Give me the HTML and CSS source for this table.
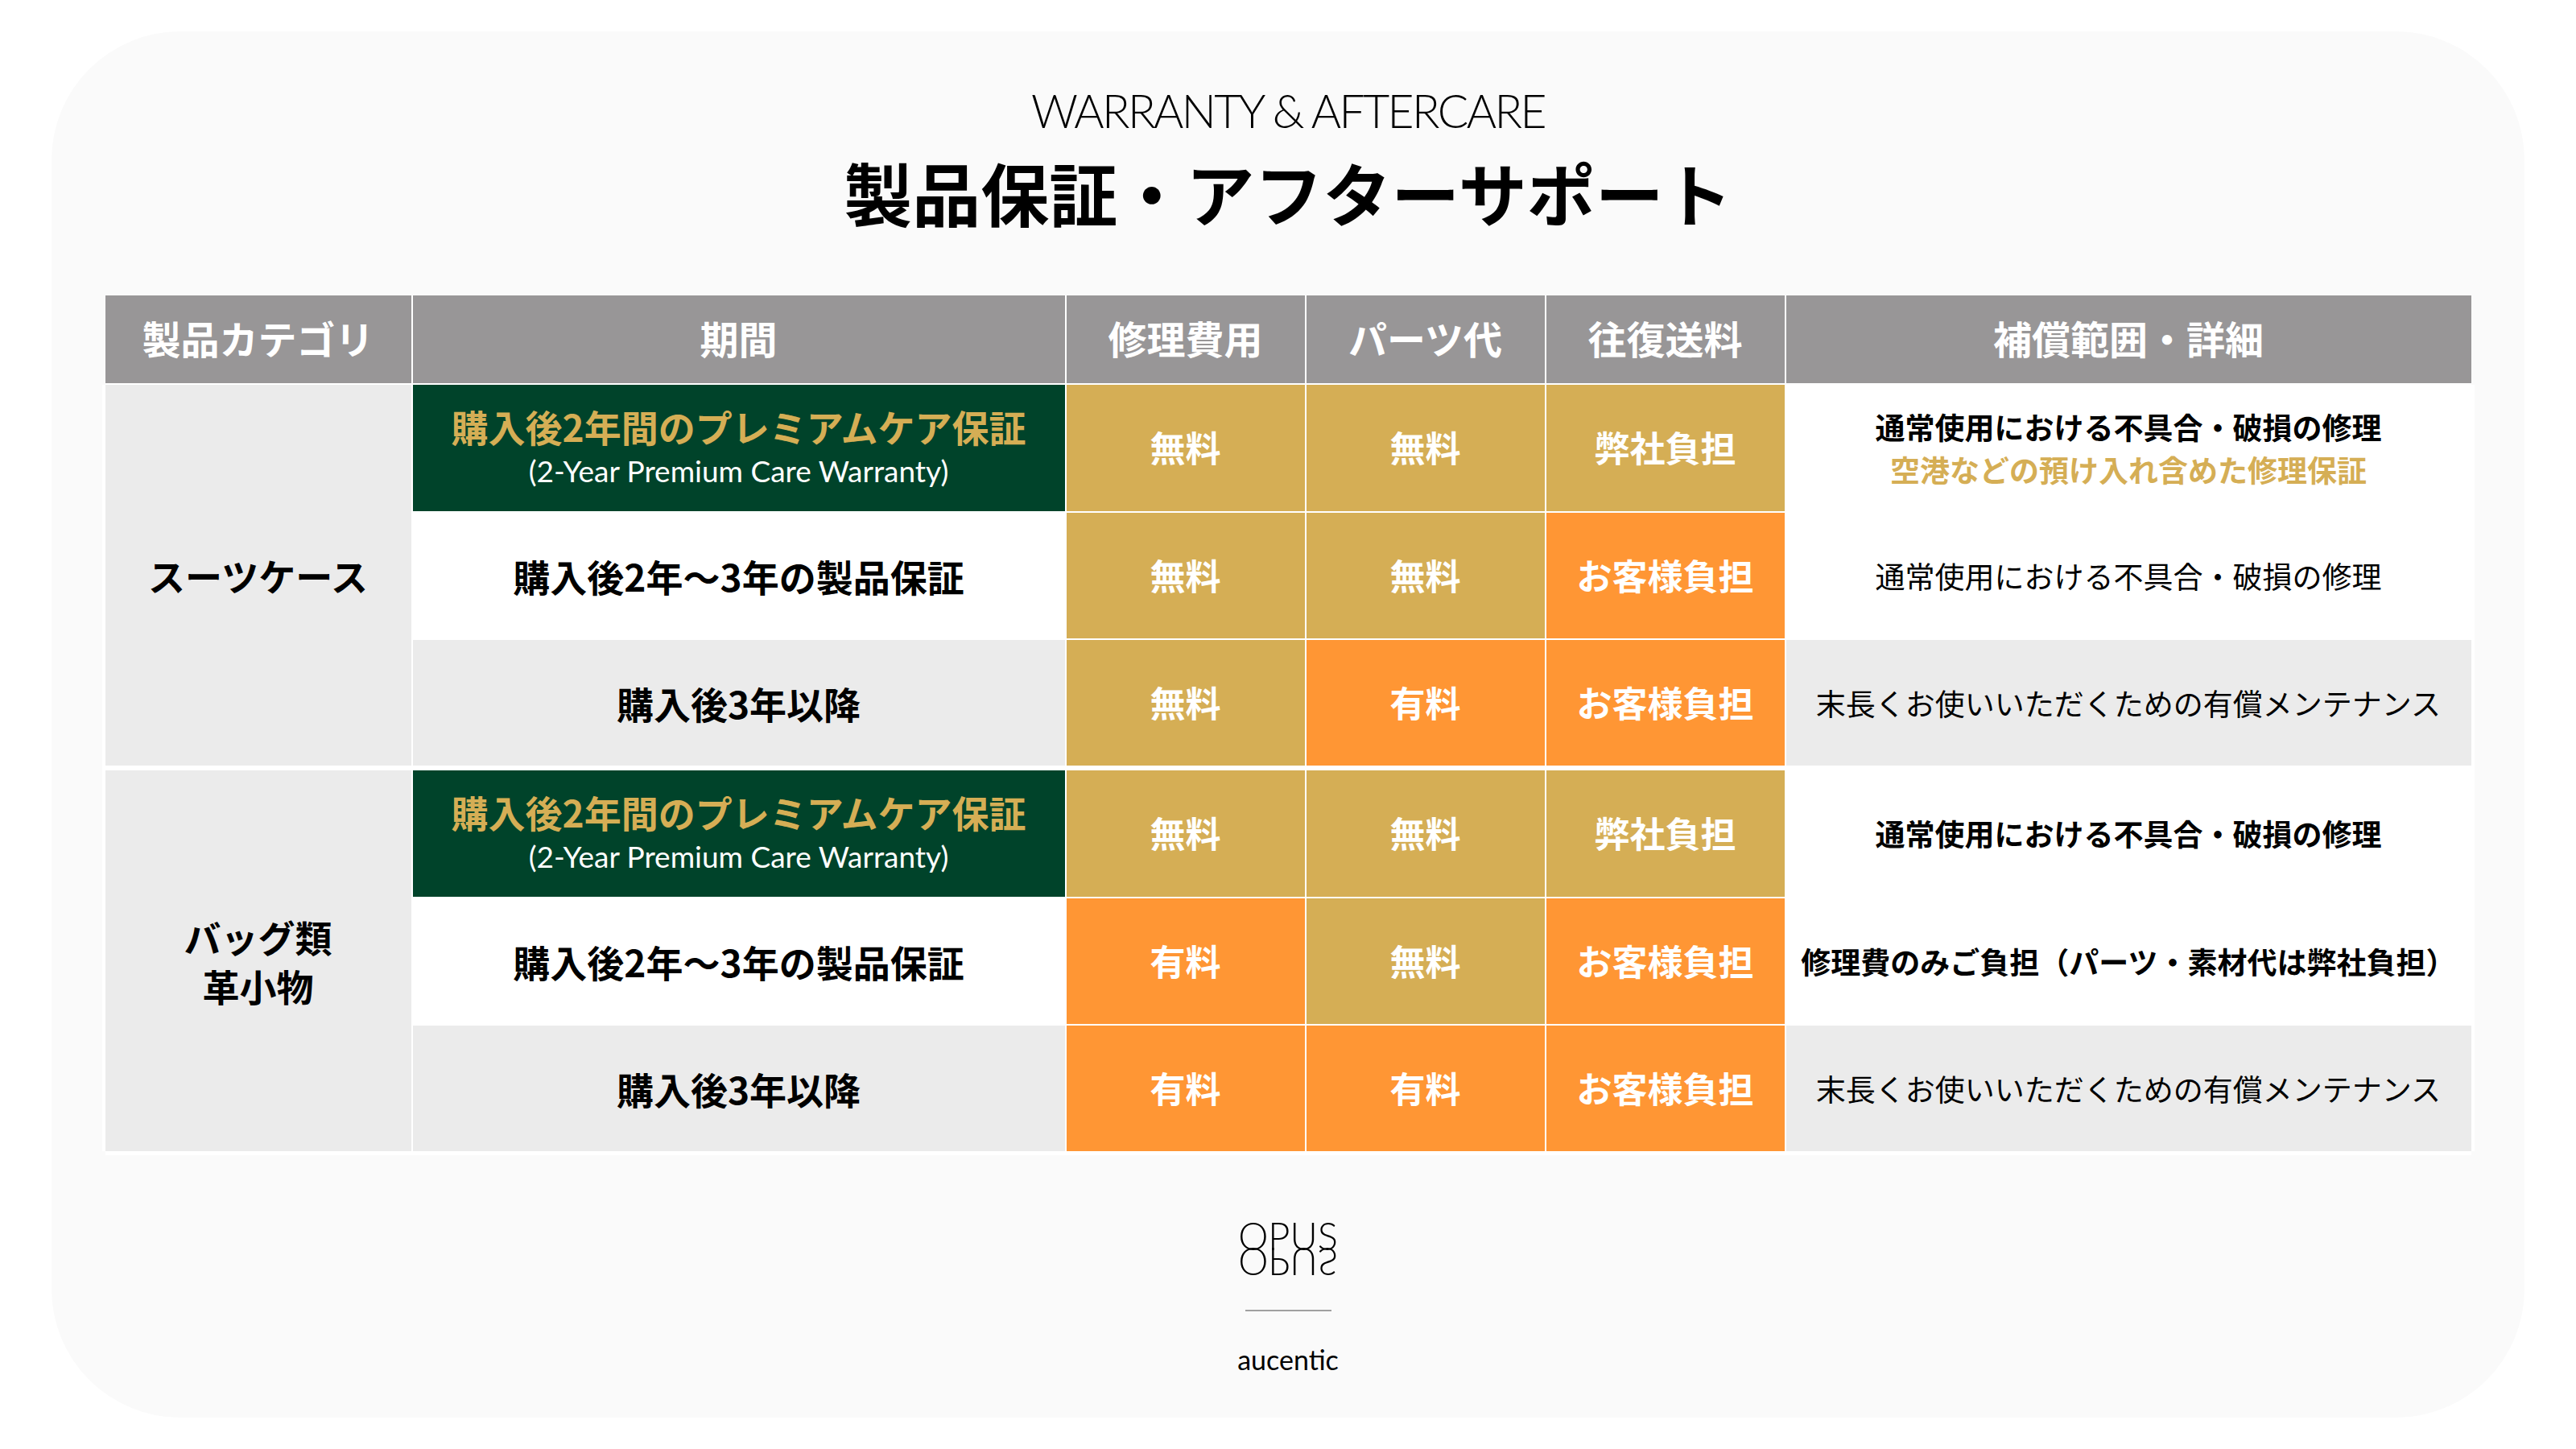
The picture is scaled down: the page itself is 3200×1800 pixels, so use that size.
FILE: index.html
```html
<!DOCTYPE html>
<html lang="ja">
<head>
<meta charset="utf-8">
<title>製品保証・アフターサポート</title>
<link rel="stylesheet" href="styles.css">
</head>
<body>
<div class="card">
  <div class="title-en">WARRANTY &amp; AFTERCARE</div>
  <h1 class="title-jp">製品保証・アフターサポート</h1>

  <div class="table">
    <div class="row head">
      <div class="th">製品カテゴリ</div>
      <div class="th">期間</div>
      <div class="th">修理費用</div>
      <div class="th">パーツ代</div>
      <div class="th">往復送料</div>
      <div class="th">補償範囲・詳細</div>
    </div>

    <div class="body">
      <div class="group">
        <div class="cat">スーツケース</div>

        <div class="period green">
          <span class="p-jp">購入後2年間のプレミアムケア保証</span>
          <span class="p-en">(2-Year Premium Care Warranty)</span>
        </div>
        <div class="val gold">無料</div>
        <div class="val gold">無料</div>
        <div class="val gold">弊社負担</div>
        <div class="detail white">
          <span class="d-bold">通常使用における不具合・破損の修理</span>
          <span class="d-gold">空港などの預け入れ含めた修理保証</span>
        </div>

        <div class="period white">購入後2年〜3年の製品保証</div>
        <div class="val gold">無料</div>
        <div class="val gold">無料</div>
        <div class="val orange">お客様負担</div>
        <div class="detail white">通常使用における不具合・破損の修理</div>

        <div class="period grey">購入後3年以降</div>
        <div class="val gold">無料</div>
        <div class="val orange">有料</div>
        <div class="val orange">お客様負担</div>
        <div class="detail grey">末長くお使いいただくための有償メンテナンス</div>
      </div>

      <div class="group">
        <div class="cat">バッグ類<br>革小物</div>

        <div class="period green">
          <span class="p-jp">購入後2年間のプレミアムケア保証</span>
          <span class="p-en">(2-Year Premium Care Warranty)</span>
        </div>
        <div class="val gold">無料</div>
        <div class="val gold">無料</div>
        <div class="val gold">弊社負担</div>
        <div class="detail white"><span class="d-bold">通常使用における不具合・破損の修理</span></div>

        <div class="period white">購入後2年〜3年の製品保証</div>
        <div class="val orange">有料</div>
        <div class="val gold">無料</div>
        <div class="val orange">お客様負担</div>
        <div class="detail white"><span class="d-bold">修理費のみご負担（パーツ・素材代は弊社負担）</span></div>

        <div class="period grey">購入後3年以降</div>
        <div class="val orange">有料</div>
        <div class="val orange">有料</div>
        <div class="val orange">お客様負担</div>
        <div class="detail grey">末長くお使いいただくための有償メンテナンス</div>
      </div>
    </div>
  </div>

  <div class="brand">
    <div class="logo">OPUS</div>
    <div class="rule"></div>
    <div class="sub">aucentic</div>
  </div>
</div>
</body>
</html>
```

FILE: styles.css
```css
* { box-sizing: border-box; }

html, body {
  margin: 0;
  padding: 0;
  background: #ffffff;
}

body {
  width: 3200px;
  height: 1800px;
  font-family: "Noto Sans CJK JP", "Noto Sans", sans-serif;
  color: #000;
}

.card {
  width: 3072px;
  height: 1722px;
  margin: 39px auto 0;
  background: #fafafa;
  border-radius: 160px;
  display: flex;
  flex-direction: column;
  align-items: center;
  padding-top: 69px;
}

.title-en {
  font-family: "Lato", "Liberation Sans", sans-serif;
  font-weight: 300;
  font-size: 57px;
  line-height: 58px;
  letter-spacing: -2.6px;
  color: #000;
}

.title-jp {
  margin: 29px 0 0;
  font-family: "Noto Sans CJK JP", sans-serif;
  font-weight: 700;
  font-size: 85px;
  line-height: 85px;
  color: #000;
}

.table {
  margin-top: 87px;
  width: 2939px;
  display: flex;
  flex-direction: column;
  gap: 2px;
  background: #fff;
}

.row.head {
  display: grid;
  grid-template-columns: 380px 810px 296px 296px 296px 851px;
  column-gap: 2px;
  height: 109px;
  background: #fff;
}

.th {
  background: #989697;
  color: #fff;
  font-weight: 700;
  font-size: 48px;
  display: flex;
  align-items: center;
  justify-content: center;
  padding-bottom: 6px;
}

.body {
  display: flex;
  flex-direction: column;
  gap: 6px;
  background: #fff;
  box-shadow: -4px 0 0 0 #fff, 4px 0 0 0 #fff, 0 5px 0 0 #fff;
}

.group {
  display: grid;
  grid-template-columns: 380px 810px 296px 296px 296px 851px;
  grid-template-rows: 157px 156px 156px;
  gap: 2px;
}

.group > div {
  display: flex;
  flex-direction: column;
  align-items: center;
  justify-content: center;
  text-align: center;
}

.cat {
  grid-row: 1 / span 3;
  background: #ebebeb;
  font-weight: 700;
  font-size: 46px;
  line-height: 61px;
}

.period {
  font-weight: 700;
  font-size: 46px;
}

.green { background: #00432a; }
.white { background: #ffffff; }
.grey  { background: #ebebeb; }
.gold  { background: #d5ae55; }
.orange { background: #ff9634; }

.green .p-jp {
  color: #d5ae55;
  font-size: 46px;
  line-height: 54px;
  margin-top: 2px;
}

.p-en {
  font-family: "Lato", "Liberation Sans", sans-serif;
  font-weight: 400;
  color: #fff;
  font-size: 37px;
  line-height: 58px;
}

.val {
  color: #fff;
  font-weight: 700;
  font-size: 44px;
  padding-bottom: 3px;
}

.detail {
  font-size: 37px;
  font-weight: 400;
  line-height: 53px;
}

.d-bold { font-weight: 700; }
.d-gold { font-weight: 700; color: #d5ae55; }

.brand {
  margin-top: 87px;
  display: flex;
  flex-direction: column;
  align-items: center;
}

.logo {
  font-family: "Lato", "Liberation Sans", sans-serif;
  font-weight: 300;
  font-size: 47px;
  line-height: 36px;
  height: 36px;
  overflow: visible;
  -webkit-box-reflect: below -3px;
}

.rule {
  width: 107px;
  height: 2px;
  background: #a0a0a0;
  margin-top: 74px;
}

.sub {
  margin-top: 40px;
  font-family: "Lato", "Liberation Sans", sans-serif;
  font-size: 34px;
  line-height: 40px;
  color: #000;
}
```
